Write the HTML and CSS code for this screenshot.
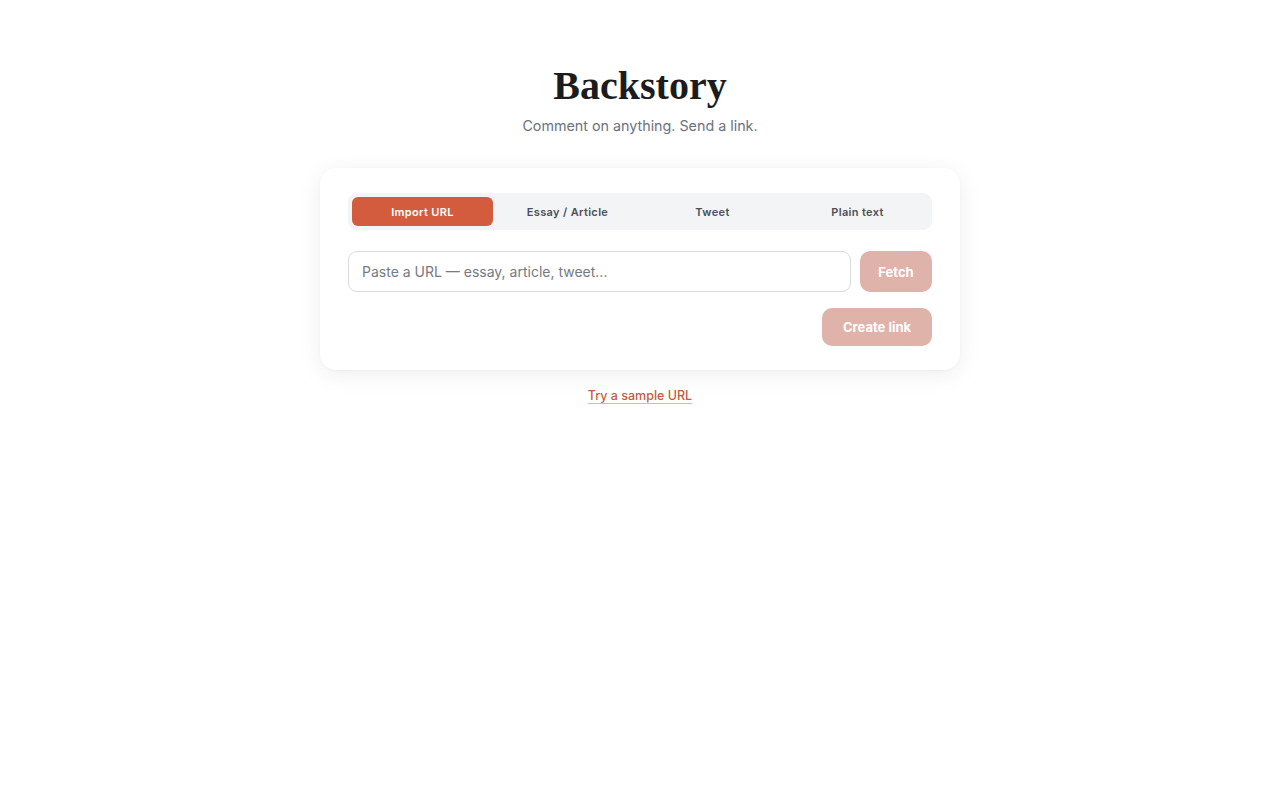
FILE: index.html
```html
<!DOCTYPE html>
<html lang="en">
<head>
<meta charset="utf-8">
<title>Backstory</title>
<link rel="stylesheet" href="styles.css">
</head>
<body>
  <main class="page">
    <header class="hero">
      <h1 class="brand">Backstory</h1>
      <p class="tagline">Comment on anything. Send a link.</p>
    </header>

    <section class="card">
      <nav class="tabs">
        <button class="tab tab-active">Import URL</button>
        <button class="tab">Essay / Article</button>
        <button class="tab">Tweet</button>
        <button class="tab">Plain text</button>
      </nav>

      <div class="url-row">
        <input class="url-input" type="text" placeholder="Paste a URL — essay, article, tweet...">
        <button class="btn btn-fetch" disabled>Fetch</button>
      </div>

      <div class="actions">
        <button class="btn btn-create" disabled>Create link</button>
      </div>
    </section>

    <a class="sample-link" href="#">Try a sample URL</a>
  </main>
</body>
</html>
```

FILE: styles.css
```css
* {
  box-sizing: border-box;
}

html, body {
  margin: 0;
  padding: 0;
  background: #ffffff;
}

body {
  font-family: Inter, "Noto Sans", "Liberation Sans", sans-serif;
  color: #1f2328;
}

.page {
  display: flex;
  flex-direction: column;
  align-items: center;
  padding-top: 62px;
}

.hero {
  text-align: center;
}

.brand {
  margin: 0;
  font-family: "Liberation Serif", "DejaVu Serif", serif;
  font-weight: 700;
  font-size: 40px;
  line-height: 48px;
  color: #1c1c1e;
}

.tagline {
  margin: 7px 0 0;
  font-size: 14.3px;
  line-height: 18px;
  color: #6b7280;
}

.card {
  margin-top: 33px;
  width: 640px;
  background: #ffffff;
  border-radius: 16px;
  padding: 25px 28px 24px;
  box-shadow: 0 4px 24px rgba(0, 0, 0, 0.07), 0 1px 3px rgba(0, 0, 0, 0.03);
}

.tabs {
  display: grid;
  grid-template-columns: repeat(4, 1fr);
  gap: 4px;
  padding: 4px;
  background: #f2f4f6;
  border-radius: 9px;
}

.tab {
  height: 29px;
  border: 0;
  border-radius: 6px;
  background: transparent;
  font-family: Inter, "Liberation Sans", sans-serif;
  font-size: 11px;
  font-weight: 600;
  letter-spacing: 0.35px;
  color: #4b4f57;
  cursor: pointer;
}

.tab-active {
  background: #d35c3e;
  color: #ffffff;
}

.url-row {
  display: flex;
  gap: 9px;
  margin-top: 21px;
}

.url-input {
  flex: 1;
  height: 41px;
  padding: 0 13px;
  border: 1px solid #d9dade;
  border-radius: 9px;
  font-family: Inter, "Liberation Sans", sans-serif;
  font-size: 14px;
  color: #1f2328;
  outline: none;
}

.url-input::placeholder {
  color: #767a82;
}

.btn {
  border: 0;
  border-radius: 10px;
  background: #dfb3a9;
  color: #ffffff;
  font-family: Inter, "Liberation Sans", sans-serif;
  font-size: 13px;
  font-weight: 700;
}

.btn-fetch {
  width: 72px;
  height: 41px;
}

.actions {
  display: flex;
  justify-content: flex-end;
  margin-top: 16px;
}

.btn-create {
  width: 110px;
  height: 38px;
}

.sample-link {
  margin-top: 18px;
  font-size: 12.5px;
  line-height: 15px;
  font-weight: 500;
  color: #c65a40;
  text-decoration: none;
  border-bottom: 1px solid #e8b3a6;
}
```
